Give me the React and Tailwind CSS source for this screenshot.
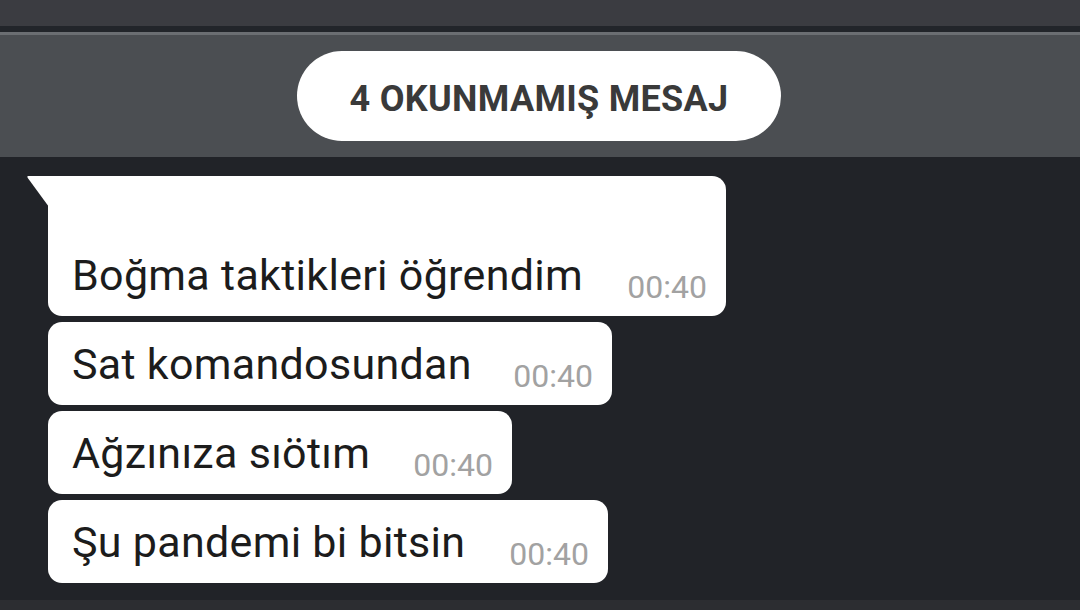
const messages = [
  { text: "Boğma taktikleri öğrendim", time: "00:40", width: "w-[678px]", first: true },
  { text: "Sat komandosundan", time: "00:40", width: "w-[564px]" },
  { text: "Ağzınıza sıötım", time: "00:40", width: "w-[464px]" },
  { text: "Şu pandemi bi bitsin", time: "00:40", width: "w-[560px]" },
];

const Bubble = ({ text, time, width, first }) => (
  <div className="relative">
    {/* tail on the first bubble of the group */}
    {first && (
      <svg
        className="absolute left-[-21px] top-0"
        width="22"
        height="32"
        viewBox="0 0 22 32"
      >
        <path d="M22 0 L1.5 0 Q-0.5 0 0.8 2 L22 31 Z" fill="#ffffff" />
      </svg>
    )}
    <div
      className={`${width} flex items-end justify-between bg-white pl-[24px] pr-[19px] pb-[17px] ${
        first ? "pt-[75px] rounded-tr-[14px] rounded-b-[14px]" : "pt-[18px] rounded-[14px]"
      }`}
    >
      <span className="text-[43px] leading-[48px] text-[#1c1c1c] tracking-[0.3px]">{text}</span>
      <span className="text-[32px] leading-[32px] text-[#a2a2a2] mb-[-4px]">{time}</span>
    </div>
  </div>
);

const App = () => {
  return (
    <div
      className="h-[610px] w-[1080px] flex flex-col bg-[#212328] overflow-hidden"
      style={{ fontFamily: "Roboto, 'Liberation Sans', sans-serif" }}
    >
      {/* Top bar */}
      <div className="h-[26px] bg-[#3b3c41]" />
      <div className="h-[6px] bg-[#22252a]" />
      <div className="h-[3px] bg-[#6b6e72]" />

      {/* Unread banner */}
      <div className="h-[122px] bg-[#4b4e52] flex items-center justify-center">
        <div className="w-[484px] h-[90px] ml-[-2px] pt-[6px] rounded-full bg-white flex items-center justify-center">
          <span className="text-[36px] font-bold text-[#3a3a3a] tracking-[0.3px]">
            4 OKUNMAMIŞ MESAJ
          </span>
        </div>
      </div>

      {/* Messages */}
      <div className="flex-1 pt-[19px] pl-[48px] flex flex-col items-start gap-[6px]">
        {messages.map((m, i) => (
          <Bubble key={i} {...m} />
        ))}
      </div>

      {/* Bottom bar */}
      <div className="h-[10px] bg-[#2c2d31]" />
    </div>
  );
};

export default App;
